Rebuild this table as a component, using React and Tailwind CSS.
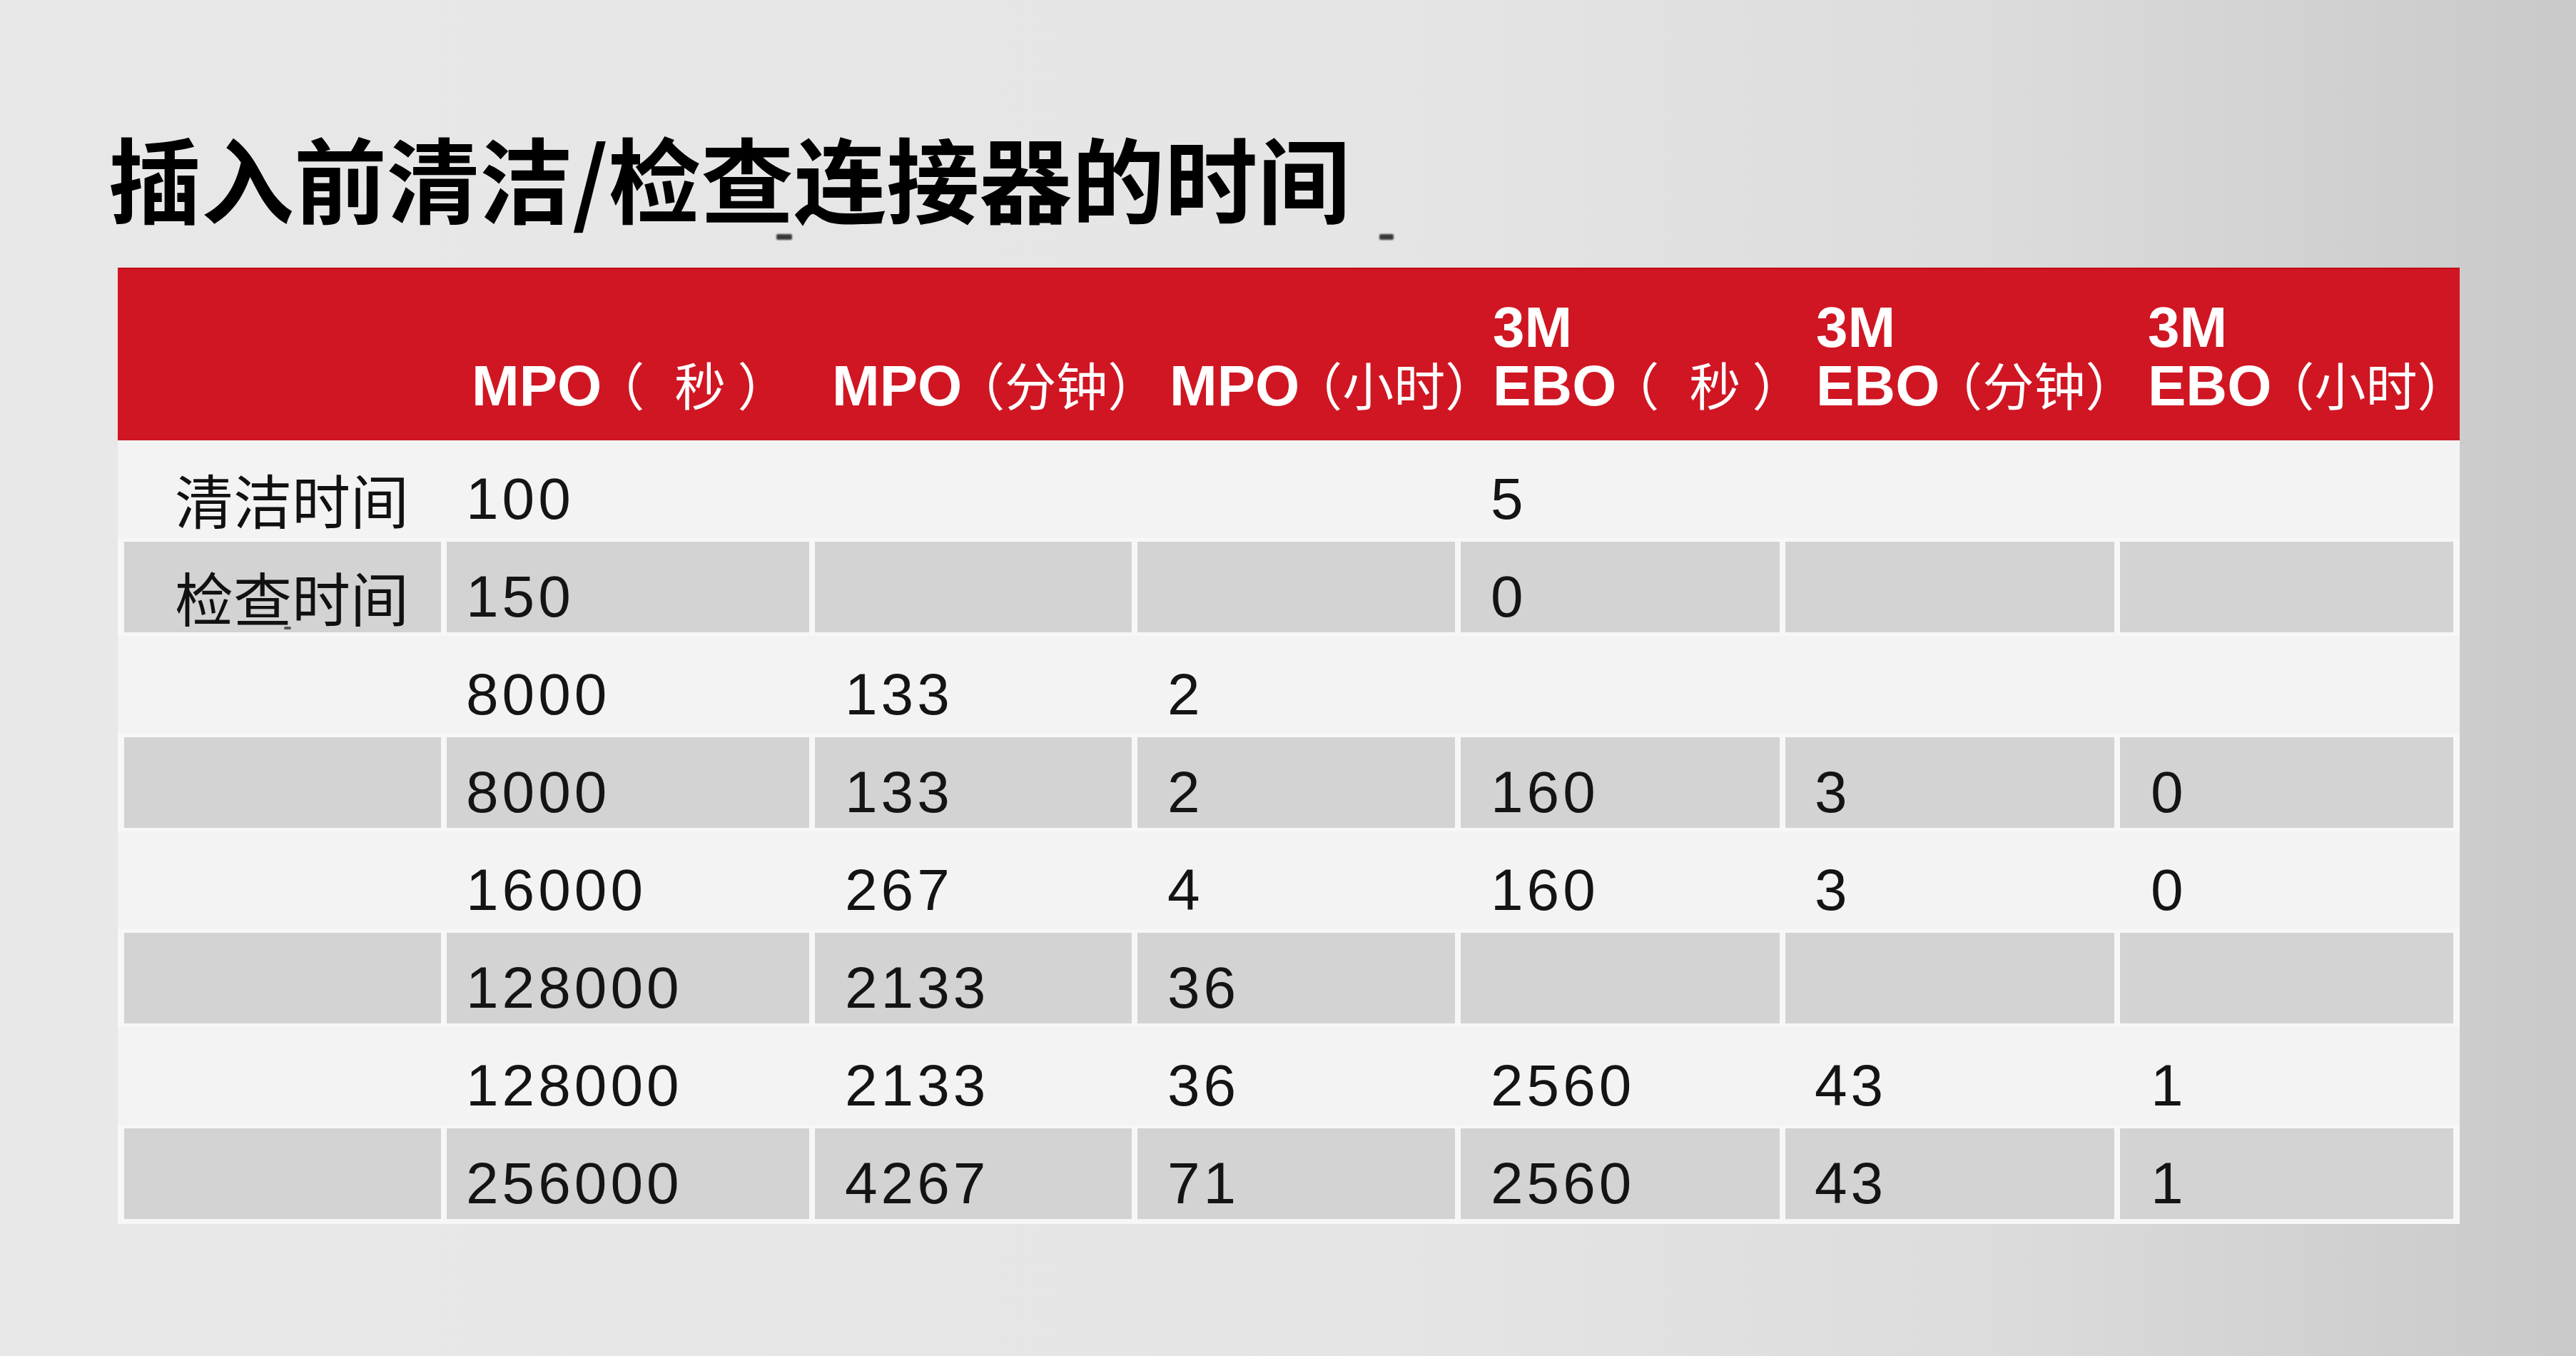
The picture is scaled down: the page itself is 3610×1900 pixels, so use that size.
const cols = 'grid-cols-[452px_516px_452px_453px_455px_469px_475px]'

// left padding per column, header and body measured separately
const headPad = ['pl-[70px]', 'pl-[39px]', 'pl-[28px]', 'pl-[49px]', 'pl-[49px]', 'pl-[47px]', 'pl-[43px]']
const bodyPad = ['pl-[71px]', 'pl-[27px]', 'pl-[42px]', 'pl-[42px]', 'pl-[42px]', 'pl-[41px]', 'pl-[43px]']

const sec = (
  <>
    <span className="ml-[42px]">秒</span>{' '}
  </>
)

const headers = [
  null,
  { main: 'MPO', unit: sec },
  { main: 'MPO', unit: '分钟' },
  { main: 'MPO', unit: '小时' },
  { top: '3M', main: 'EBO', unit: sec },
  { top: '3M', main: 'EBO', unit: '分钟' },
  { top: '3M', main: 'EBO', unit: '小时' },
]

const rows = [
  ['清洁时间', '100', '', '', '5', '', ''],
  ['检查时间', '150', '', '', '0', '', ''],
  ['', '8000', '133', '2', '', '', ''],
  ['', '8000', '133', '2', '160', '3', '0'],
  ['', '16000', '267', '4', '160', '3', '0'],
  ['', '128000', '2133', '36', '', '', ''],
  ['', '128000', '2133', '36', '2560', '43', '1'],
  ['', '256000', '4267', '71', '2560', '43', '1'],
]

const HeadCell = ({ h, i }) => (
  <div className={`flex flex-col justify-end pb-[35px] text-white text-[80px] font-bold leading-[82px] ${headPad[i]}`}>
    {h && h.top && <div>{h.top}</div>}
    {h && (
      <div className="whitespace-nowrap">
        {h.main}
        <span className="font-normal text-[72px] leading-none font-['Noto_Sans_CJK_SC',sans-serif]">
          <span className="ml-[24px] [font-feature-settings:'halt']">（</span>
          {h.unit}）
        </span>
      </div>
    )}
  </div>
)

const Row = ({ cells, gray, last, idx }) => (
  <div className={`grid ${cols} h-[137px] px-[5px] ${gray ? 'bg-[#f7f7f7]' : 'bg-[#f3f3f3]'} ${last ? 'h-[139px] border-b-2 border-[#f7f7f7]' : ''}`}>
    {cells.map((c, i) => (
      <div
        key={i}
        className={`relative flex items-center pt-[26px] border-x-[4px] border-y-[5px] ${gray ? 'bg-[#d3d3d3] border-[#f7f7f7]' : 'border-[#f3f3f3]'} ${bodyPad[i]}`}
      >
        {i === 0 ? (
          <span className="text-[82px] leading-none text-[#111] font-['Noto_Sans_CJK_SC',sans-serif]">{c}</span>
        ) : (
          <span className="text-[82px] leading-none tracking-[5px] text-[#141414]">{c}</span>
        )}
        {/* little stray mark under 检查时间 */}
        {idx === 1 && i === 0 && (
          <span className="absolute left-[224px] top-[119px] w-[10px] h-[4px] rounded-full bg-[#555] blur-[0.5px]" />
        )}
      </div>
    ))}
  </div>
)

export default function App() {
  return (
    <div className="w-[3610px] h-[1900px] overflow-hidden bg-[linear-gradient(90deg,#e8e8e8_0%,#e5e5e5_54%,#dcdcdc_77%,#c9c9c9_100%)] font-['Liberation_Sans','Noto_Sans_CJK_SC',sans-serif]">
      <h1 className="relative pt-[181px] pl-[152px] text-[130px] leading-none font-bold text-black font-['Noto_Sans_CJK_SC',sans-serif]">
        插入前清洁/检查连接器的时间
        <span className="absolute left-[1088px] top-[328px] w-[22px] h-[8px] rounded-[2px] bg-[#3a3a3a] blur-[1px]" />
        <span className="absolute left-[1933px] top-[328px] w-[20px] h-[8px] rounded-[2px] bg-[#3a3a3a] blur-[1px]" />
      </h1>

      {/* table */}
      <div className="mt-[64px] ml-[165px] w-[3282px]">
        <div className={`grid ${cols} h-[242px] px-[5px] bg-[#d01623] border-t-2 border-[#c20b15]`}>
          {headers.map((h, i) => (
            <HeadCell key={i} h={h} i={i} />
          ))}
        </div>
        {rows.map((r, i) => (
          <Row key={i} idx={i} cells={r} gray={i % 2 === 1} last={i === rows.length - 1} />
        ))}
      </div>
    </div>
  )
}
